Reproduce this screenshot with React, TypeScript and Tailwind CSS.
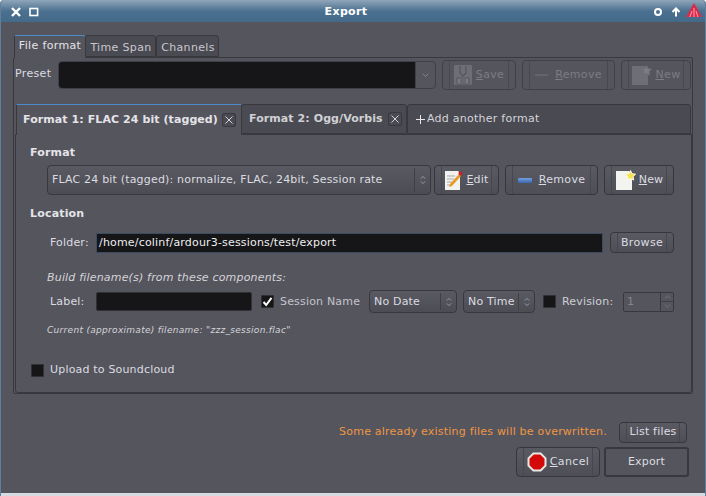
import React from "react";

const FONT = "font-['DejaVu_Sans',sans-serif]";

// Ardour's dark GTK buttons have a thin line inset from each end
const Btn: React.FC<{
  className?: string;
  disabled?: boolean;
  children: React.ReactNode;
}> = ({ className = "", disabled = false, children }) => (
  <div
    className={`relative flex items-center justify-center rounded-[4px] border shrink-0 ${
      disabled
        ? "border-[#404048] text-[#7c7c84]"
        : "border-[#36363c] bg-gradient-to-b from-[#5a5a63] to-[#4e4e57] text-[#dcdce0]"
    } ${className}`}
  >
    <span
      className={`absolute left-[6px] top-0 bottom-0 w-px ${disabled ? "bg-[#48484f]" : "bg-[#47474e]"}`}
    />
    <span
      className={`absolute right-[6px] top-0 bottom-0 w-px ${disabled ? "bg-[#48484f]" : "bg-[#47474e]"}`}
    />
    {children}
  </div>
);

const Updown: React.FC<{ className?: string }> = ({ className = "" }) => (
  <svg width="6" height="10" viewBox="0 0 6 10" className={className} fill="none" stroke="#9a9aa2" strokeWidth="1">
    <path d="M0.8 3.6 3 1.4 5.2 3.6" />
    <path d="M0.8 6.4 3 8.6 5.2 6.4" />
  </svg>
);

const Select: React.FC<{ className?: string; children: React.ReactNode }> = ({
  className = "",
  children,
}) => (
  <div
    className={`flex items-center rounded-[4px] border border-[#38383e] bg-gradient-to-b from-[#5a5a63] to-[#4c4c55] text-[#dcdce0] pl-[4px] shrink-0 ${className}`}
  >
    <span className="flex-1 truncate">{children}</span>
    <span className="w-px self-stretch my-[2px] bg-[#3f3f46]" />
    <span className="w-[15px] flex justify-center">
      <Updown />
    </span>
  </div>
);

const Check: React.FC<{ checked?: boolean }> = ({ checked }) => (
  <div className="w-[13px] h-[13px] bg-[#161618] border border-[#303034] rounded-[1px] flex items-center justify-center shrink-0">
    {checked && (
      <svg width="11" height="11" viewBox="0 0 11 11" fill="none" stroke="#ffffff" strokeWidth="2">
        <path d="M1.5 6 4.2 9 9.5 1.8" />
      </svg>
    )}
  </div>
);

const CloseBox: React.FC = () => (
  <div className="w-[14px] h-[14px] rounded-[2px] border border-[#38383e] bg-[#4a4a52] flex items-center justify-center shrink-0">
    <svg width="8" height="8" viewBox="0 0 8 8" stroke="#e4e4e8" strokeWidth="0.9">
      <path d="M0.5 0.5 7.5 7.5M7.5 0.5 0.5 7.5" />
    </svg>
  </div>
);

const NewIcon: React.FC<{ dim?: boolean }> = ({ dim }) => (
  <svg width="22" height="21" viewBox="0 0 22 21">
    <path d="M1 1h13l3 3v16H1z" fill={dim ? "#6e6e76" : "#f3f3ef"} />
    <path
      d="M15.5 0.5l1.6 3.2 3.5.5-2.5 2.4.6 3.5-3.2-1.6-3.1 1.6.6-3.5-2.5-2.4 3.500-.5z"
      fill={dim ? "#7c7c84" : "#f7e24a"}
      stroke={dim ? "#6e6e76" : "#fbfbe8"}
      strokeWidth="1"
    />
  </svg>
);

const App: React.FC = () => {
  return (
    <div
      className={`${FONT} w-[706px] h-[496px] overflow-hidden flex flex-col bg-[#55555e] text-[11px] leading-[14px] tracking-[0.18px] text-[#dcdce0] rounded-t-[4px] border-x border-[#5f7f9c]`}
    >
      {/* Title bar */}
      <div className="h-[22px] shrink-0 flex items-center bg-gradient-to-b from-[#8fa6ba] via-[#4c7190] to-[#446a89] pl-[9px] pr-[3px] pt-[2px]">
        <svg width="12" height="12" viewBox="0 0 12 12" stroke="#fff" strokeWidth="2.4">
          <path d="M2 2 10 10M10 2 2 10" />
        </svg>
        <svg width="10" height="10" viewBox="0 0 10 10" fill="none" stroke="#fff" strokeWidth="1.6" className="ml-[7px]">
          <rect x="1" y="1.5" width="7.6" height="7" />
        </svg>
        <span className="flex-1 text-center font-bold text-white text-[11px] tracking-[0.35px]">Export</span>
        <svg width="10" height="10" viewBox="0 0 10 10" fill="none" stroke="#fff" strokeWidth="2" className="mr-[8px]">
          <circle cx="5" cy="5" r="3" />
        </svg>
        <svg width="10" height="10" viewBox="0 0 10 10" stroke="#fff" strokeWidth="2" fill="none" className="mr-[5px]">
          <path d="M5 9.500V2M1.500 5 5 1.500 8.500 5" />
        </svg>
        <svg width="16" height="15" viewBox="0 0 16 15" className="-mt-[3px]">
          <path d="M8 0 16 14 H0z" fill="#dc2a4a" />
          <path d="M8 5v9M6 8 4 14M10 8l2 6" stroke="#f7a0b0" strokeWidth="1" />
        </svg>
      </div>

      <div className="flex-1 flex flex-col pl-[12px] pr-[12px] pt-[13px]">
        {/* Top tabs */}
        <div className="flex h-[22px] pl-[1px] text-[#c8c8ce] tracking-[0.35px]">
          <div className="w-[71px] h-[23px] z-10 border-t border-[#4a8ccc] border-l border-l-[#38383e] bg-[#55555e] text-center text-[#e4e4e8] pt-[3px] rounded-t-[2px]">
            File format
          </div>
          <div className="w-[71px] border border-[#38383e] bg-[#4a4a52] text-center pt-[5px] pl-[1px] rounded-t-[3px]">
            Time Span
          </div>
          <div className="w-[63px] border border-[#38383e] bg-[#4a4a52] text-center pt-[5px] pl-[1px] rounded-t-[3px]">
            Channels
          </div>
        </div>

        {/* File format page */}
        <div className="w-[680px] h-[337px] border border-[#38383e] rounded-[2px] flex flex-col">
          <div className="flex items-center h-[30px] mt-[2px] pl-[1px]">
            <span className="w-[43px] pb-[2px] tracking-[0.35px]">Preset</span>
            <div className="flex w-[378px] h-[28px] rounded-[4px] border border-[#404048] overflow-hidden">
              <div className="flex-1 bg-[#161618]" />
              <div className="w-[20px] flex items-center justify-center border-l border-[#404048]">
                <svg width="7" height="5" viewBox="0 0 7 5" fill="none" stroke="#85858d">
                  <path d="M0.8 0.8 3.500 3.600 6.200 0.8" />
                </svg>
              </div>
            </div>
            <Btn disabled className="w-[74px] h-[30px] ml-[6px] gap-[4px] tracking-[0.35px]">
              <svg width="18" height="20" viewBox="0 0 18 20">
                <path d="M1 0h16l1 1v18l-1 1H1l-1-1V1z" fill="#6e6e76" />
                <path d="M6 1v7l3 3 3-3V1" stroke="#55555e" strokeWidth="1.200" fill="none" />
                <path d="M3 13h12v6H3z" fill="#7a7a82" stroke="#55555e" strokeWidth="1" />
                <path d="M6 15h6M6 17h6" stroke="#55555e" strokeWidth="1" />
              </svg>
              <span><u>S</u>ave</span>
            </Btn>
            <Btn disabled className="w-[93px] h-[30px] ml-[6px] gap-[7px] tracking-[0.35px]">
              <span className="w-[13px] h-[2px] bg-[#64646c]" />
              <span><u>R</u>emove</span>
            </Btn>
            <Btn disabled className="w-[70px] h-[30px] ml-[6px] gap-[2px] tracking-[0.35px]">
              <NewIcon dim />
              <span><u>N</u>ew</span>
            </Btn>
          </div>

          {/* Format tabs */}
          <div className="flex h-[30px] mt-[14px] ml-[2px] w-[675px]">
            <div className="w-[225px] border-t border-l border-[#38383e] border-t-[#4a8ccc] flex items-center pl-[6px] z-10 h-[31px] bg-[#55555e]">
              <span className="font-bold text-[#e4e4e8] w-[199px] whitespace-nowrap tracking-[0.08px]">Format 1: FLAC 24 bit (tagged)</span>
              <CloseBox />
            </div>
            <div className="w-[166px] border border-[#38383e] bg-[#4a4a52] rounded-t-[3px] flex items-center pl-[7px]">
              <span className="font-bold text-[#d0d0d4] w-[139px] whitespace-nowrap tracking-[0.08px]">Format 2: Ogg/Vorbis</span>
              <CloseBox />
            </div>
            <div className="flex-1 border border-[#38383e] bg-[#4a4a52] rounded-t-[3px] flex items-center pl-[7px] text-[#d4d4d8] tracking-[0.25px]">
              <svg width="11" height="11" viewBox="0 0 11 11" stroke="#e8e8ec" strokeWidth="1" className="mr-[1px]">
                <path d="M5.500 1v9M1 5.500h9" />
              </svg>
              Add another format
            </div>
          </div>

          {/* Format page */}
          <div className="ml-[1px] w-[677px] h-[261px] border border-[#38383e] rounded-b-[3px] pl-[14px] flex flex-col">
            <div className="font-bold mt-[11px] text-[#e4e4e8]">Format</div>
            <div className="flex items-center mt-[5px] ml-[17px]">
              <Select className="w-[384px] h-[30px]">FLAC 24 bit (tagged): normalize, FLAC, 24bit, Session rate</Select>
              <Btn className="w-[65px] h-[30px] ml-[3px] gap-[3px]">
                <svg width="19" height="21" viewBox="0 0 19 21">
                  <path d="M1 1h13l2 2v17H1z" fill="#f2f2ee" />
                  <path d="M3 6h8M3 9h7M3 12h5M3 15h5" stroke="#a8a8a8" strokeWidth="1" />
                  <path d="M5 17l1-3 9-10 2 2-9 10z" fill="#e89a28" />
                  <circle cx="16.500" cy="3.500" r="2" fill="#c8202c" />
                </svg>
                <span><u>E</u>dit</span>
              </Btn>
              <Btn className="w-[93px] h-[30px] ml-[6px] gap-[7px]">
                <span className="w-[14px] h-[5px] bg-gradient-to-b from-[#76a0dc] to-[#3a66ae] rounded-[1px]" />
                <span className="tracking-[0.35px]"><u>R</u>emove</span>
              </Btn>
              <Btn className="w-[70px] h-[30px] ml-[6px] gap-[2px]">
                <NewIcon />
                <span><u>N</u>ew</span>
              </Btn>
            </div>

            <div className="font-bold mt-[12px] text-[#e4e4e8]">Location</div>
            <div className="flex items-center mt-[11px] ml-[20px] h-[21px]">
              <span className="w-[46px]">Folder:</span>
              <div className="w-[507px] h-[20px] bg-[#161618] border border-[#3c4c60] pl-[2px] flex items-center text-[#eeeef0]">
                /home/colinf/ardour3-sessions/test/export
              </div>
              <Btn className="w-[64px] h-[21px] ml-[7px] tracking-[0.35px]">Browse</Btn>
            </div>

            <div className="italic mt-[18px] ml-[17px] text-[#d4d4d8]">Build filename(s) from these components:</div>
            <div className="flex items-center mt-[5px] ml-[20px] h-[23px]">
              <span className="w-[46px]">Label:</span>
              <div className="w-[156px] h-[19px] bg-[#161618] border border-[#303034] rounded-[2px]" />
              <span className="ml-[9px]"><Check checked /></span>
              <span className="ml-[6px] w-[89px] text-[#c4c4ca]">Session Name</span>
              <Select className="w-[88px] h-[23px]">No Date</Select>
              <Select className="w-[72px] h-[23px] ml-[6px]">No Time</Select>
              <span className="ml-[8px]"><Check /></span>
              <span className="ml-[6px] w-[61px] text-[#cfcfd4]">Revision:</span>
              <div className="flex w-[51px] h-[20px] rounded-[2px] border border-[#38383e]">
                <span className="flex-1 pl-[3px] text-[#85858d] leading-[18px]">1</span>
                <div className="w-[13px] border-l border-[#38383e] flex flex-col">
                  <div className="flex-1 flex items-center justify-center border-b border-[#404048]">
                    <svg width="7" height="4" viewBox="0 0 7 4" fill="none" stroke="#74747c"><path d="M0.8 3.400 3.500 0.8 6.200 3.400" /></svg>
                  </div>
                  <div className="flex-1 flex items-center justify-center">
                    <svg width="7" height="4" viewBox="0 0 7 4" fill="none" stroke="#74747c"><path d="M0.8 0.600 3.500 3.200 6.200 0.600" /></svg>
                  </div>
                </div>
              </div>
            </div>
            <div className="italic text-[9px] leading-[11px] tracking-[0.3px] mt-[12px] ml-[17px] text-[#d4d4d8]">
              Current (approximate) filename: "zzz_session.flac"
            </div>
            <div className="flex items-center mt-[27px] ml-[1px]">
              <Check />
              <span className="ml-[6px]">Upload to Soundcloud</span>
            </div>
          </div>
        </div>

        {/* Bottom actions */}
        <div className="flex items-center justify-end mt-[28px] h-[20px] pr-[6px]">
          <span className="text-[#ee9544] mr-[12px] tracking-[0.21px]">Some already existing files will be overwritten.</span>
          <Btn className="w-[68px] h-[21px]">List files</Btn>
        </div>
        <div className="flex items-center justify-end mt-[5px] pr-[4px]">
          <Btn className="w-[84px] h-[30px] gap-[3px]">
            <svg width="20" height="20" viewBox="0 0 20 20">
              <path d="M6 0.500h8l5.500 5.500v8L14 19.500H6L0.500 14V6z" fill="#e8e8e4" />
              <path d="M6.800 2.500h6.400l4.300 4.300v6.400l-4.300 4.300H6.800l-4.300-4.300V6.800z" fill="#d40a0a" />
            </svg>
            <span className="tracking-[0.35px]"><u>C</u>ancel</span>
          </Btn>
          <div className="w-[85px] h-[30px] ml-[4px] rounded-[3px] border-[2px] border-[#38383e] flex items-center justify-center text-[#dcdce0]">
            Export
          </div>
        </div>
      </div>

      <div className="h-[3px] shrink-0 bg-[#d5dbe0]" />
    </div>
  );
};

export default App;
